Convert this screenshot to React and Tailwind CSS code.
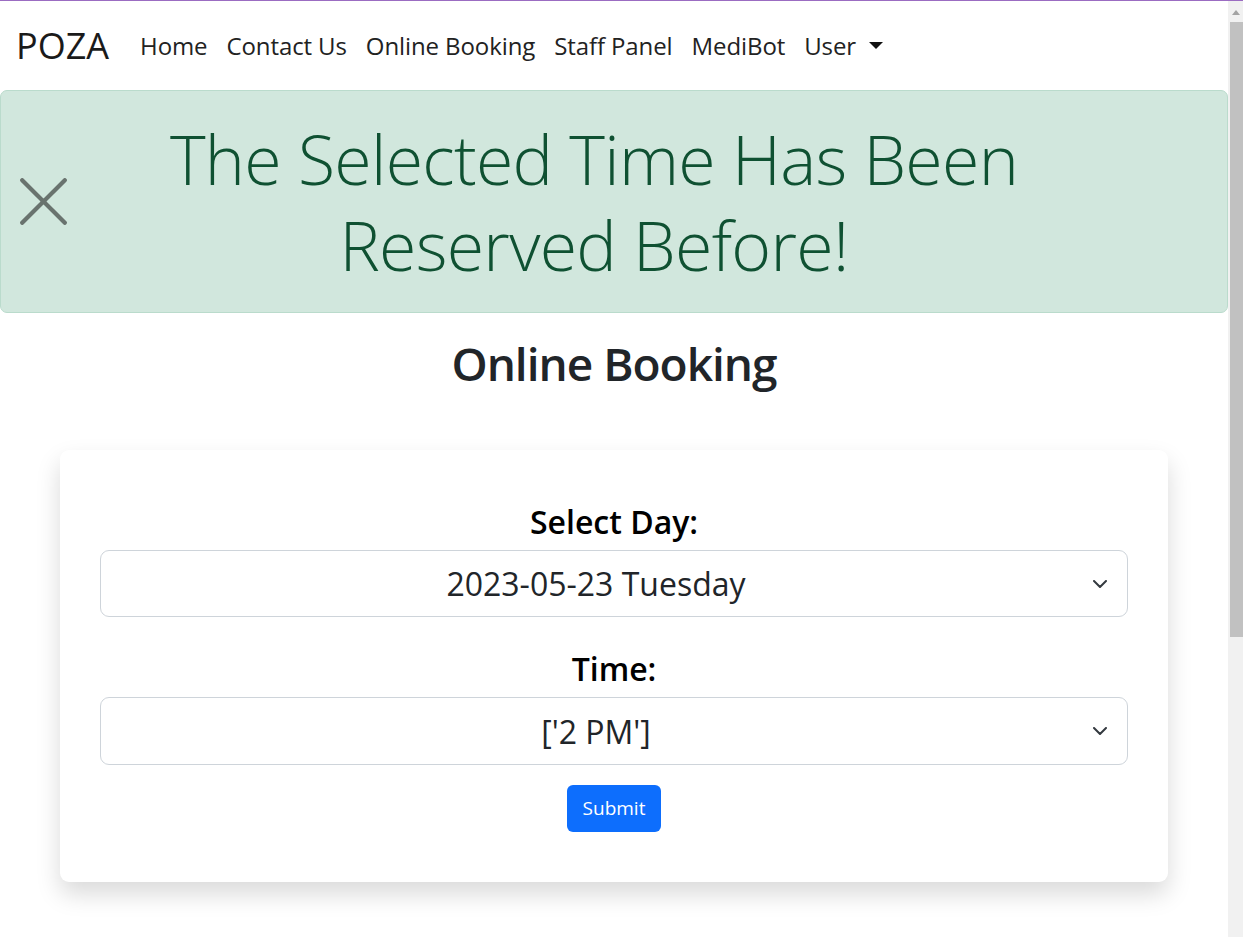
import React from "react";

const sans = "font-['Open_Sans','Noto_Sans',sans-serif]";

function Chevron() {
  return (
    <svg width="14" height="8" viewBox="0 0 14 8" className="absolute right-[20px] top-1/2 -translate-y-1/2">
      <path d="M1 1l6 6 6-6" fill="none" stroke="#343a40" strokeWidth="2" strokeLinecap="round" strokeLinejoin="round" />
    </svg>
  );
}

function FakeSelect({ value, height }) {
  return (
    <div
      role="combobox"
      className={`relative flex items-center rounded-[9px] border border-[#ced4da] bg-white pl-[18px] pr-[54px] ${height}`}
    >
      <span className="flex-1 text-center text-[32px] leading-[45px] text-[#212529]">{value}</span>
      <Chevron />
    </div>
  );
}

export default function App() {
  const links = ["Home", "Contact Us", "Online Booking", "Staff Panel", "MediBot"];

  return (
    <div className={`flex h-[937px] flex-col overflow-hidden bg-white ${sans}`}>
      <div className="h-px shrink-0 bg-[#9b6cc2]" />

      <div className="flex min-h-0 flex-1">
        <div className="min-w-0 flex-1">
          {/* navbar */}
          <nav className="flex h-[89px] items-center pl-[16px]">
            <span className="mr-[31px] text-[36px] leading-none text-[#1a1a1a]">POZA</span>
            <div className="flex items-center gap-[19px] text-[24px] tracking-[-0.1px] text-[#222]">
              {links.map((l) => (
                <a key={l} className="leading-none">{l}</a>
              ))}
              <a className="flex items-center gap-[13px] leading-none">
                User
                <span className="inline-block h-0 w-0 border-x-[7px] border-t-[7px] border-x-transparent border-t-[#111]" />
              </a>
            </div>
          </nav>

          {/* alert */}
          <div className="flex h-[223px] items-center rounded-[7px] border border-[#badbcc] bg-[#d1e7dd] pl-[19px]">
            <button className="shrink-0" aria-label="Close">
              <svg width="47" height="47" viewBox="0 0 47 47" className="block">
                <path d="M2.2 2.2L44.8 44.8M44.8 2.2L2.2 44.8" stroke="#69736e" strokeWidth="4.2" strokeLinecap="round" />
              </svg>
            </button>
            <p className="flex-1 pr-[106px] text-center text-[68px] font-light leading-[86px] tracking-[-0.7px] text-[#0f5132]">
              The Selected Time Has Been
              <br />
              Reserved Before!
            </p>
          </div>

          <h2 className="mt-[21px] text-center text-[46px] font-semibold leading-[58px] tracking-[-1px] text-[#212529]">
            Online Booking
          </h2>

          {/* booking card */}
          <div className="mx-[60px] mt-[58px] rounded-[9px] bg-white px-[40px] pb-[50px] pt-[49px] shadow-[0_12px_24px_rgba(0,0,0,0.15)]">
            <label className="mb-[6px] block text-center text-[32px] font-semibold leading-[45px] text-black">
              Select Day:
            </label>
            <FakeSelect value="2023-05-23 Tuesday" height="h-[67px]" />

            <label className="mb-[6px] mt-[29px] block text-center text-[32px] font-semibold leading-[45px] text-black">
              Time:
            </label>
            <FakeSelect value="['2 PM']" height="h-[68px]" />

            <div className="mt-[20px] flex justify-center">
              <button className="h-[47px] rounded-[6px] bg-[#0d6efd] px-[16px] text-[19px] text-white">
                Submit
              </button>
            </div>
          </div>
        </div>

        {/* browser scrollbar */}
        <div className="flex w-[15px] shrink-0 flex-col bg-[#f1f1f1]">
          <div className="flex h-[21px] shrink-0 justify-center pt-[9px]">
            <span className="inline-block h-0 w-0 border-x-[4.5px] border-b-[5px] border-x-transparent border-b-[#a3a3a3]" />
          </div>
          <div className="ml-[2px] h-[615px] shrink-0 bg-[#c1c1c1]" />
        </div>
      </div>
    </div>
  );
}
